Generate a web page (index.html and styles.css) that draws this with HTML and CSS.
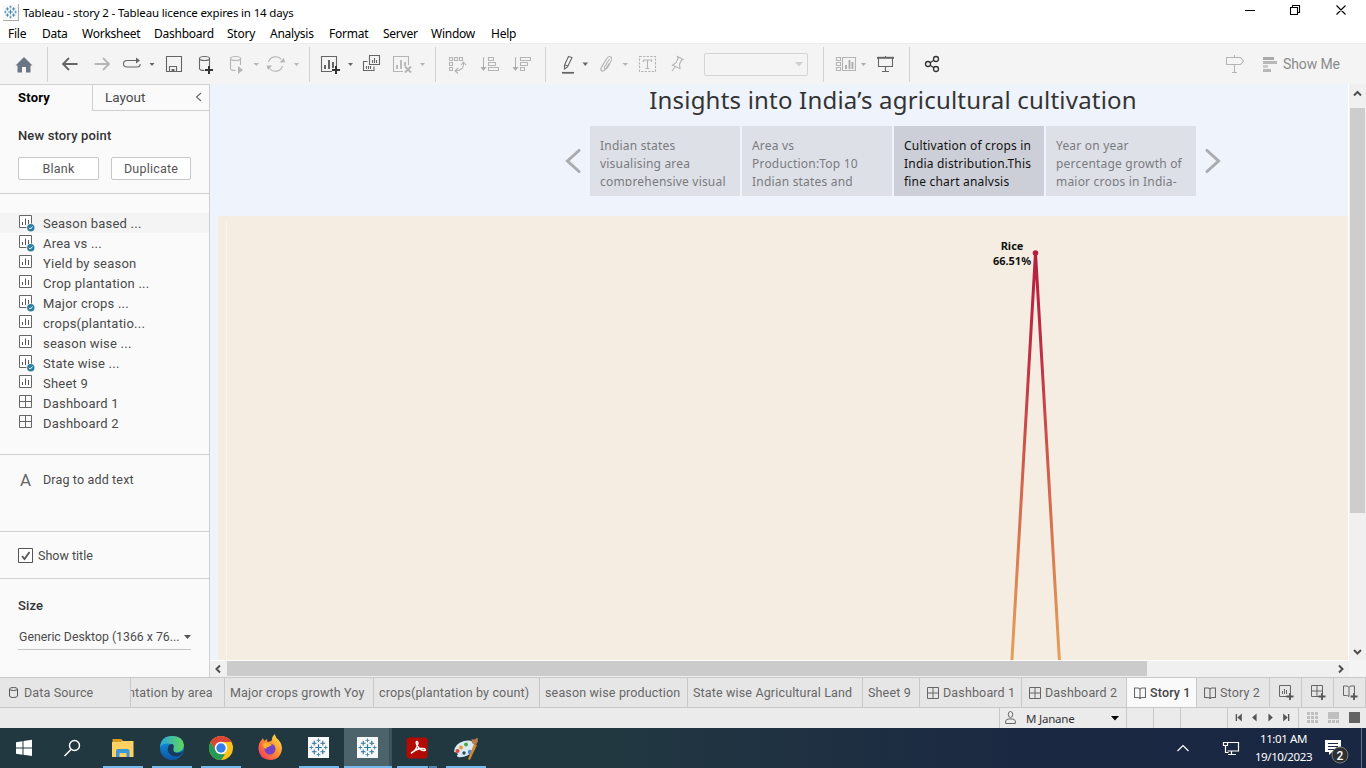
FILE: index.html
```html
<!DOCTYPE html>
<html lang="en">
<head>
<meta charset="utf-8">
<title>Tableau - story 2</title>
<link rel="stylesheet" href="styles.css">
</head>
<body>
<svg class="defs" width="0" height="0">
  <symbol id="sheet" viewBox="0 0 18 18"><path d="M1.5 1.5h12v12h-12z" fill="#fff" stroke="#666"/><path d="M4.5 8v3M7.5 4.500v6.500M10.500 6v5" stroke="#555" fill="none"/></symbol>
  <symbol id="sheet-used" viewBox="0 0 18 18"><path d="M1.500 1.500h12v12h-12z" fill="#fff" stroke="#666"/><path d="M4.500 8v3M7.500 4.500v6.500M10.500 6v5" stroke="#555" fill="none"/><circle cx="12.800" cy="13.800" r="4.400" fill="#fafafa"/><circle cx="12.800" cy="13.800" r="3.700" fill="#2e7d9f"/><path d="M11 13.800l1.300 1.300 2.300-2.600" stroke="#fff" fill="none"/></symbol>
  <symbol id="dash" viewBox="0 0 18 18"><path d="M1.500 1.500h12v12h-12zM7.500 1.500v12M1.500 7.500h12" fill="none" stroke="#666"/></symbol>
  <symbol id="dash-s" viewBox="0 0 12 12"><path d="M.5.5h11v11H.5zM6 .5v11M.5 6h11" fill="none" stroke="#666"/></symbol>
  <symbol id="book" viewBox="0 0 12 12"><path d="M.5 1l3.500 0q1.500.2 2 1.500 .5-1.300 2-1.500l3.500 0v9.500H8.500q-2 0-2.500 1.200-.5-1.200-2.500-1.200H.5zM6 2.500v9" fill="none" stroke="#666" stroke-width="1.100"/></symbol>
  <symbol id="tab" viewBox="0 0 22 22"><path fill="#f7f8f8" d="M0 0h22v22H0z"/><g fill="none"><path d="M11 7.500v7M7.500 11h7" stroke="#2b7cae" stroke-width="1.300"/><path d="M11 1.500v4M9 3.500h4M11 16.500v4M9 18.500h4M1.500 11h4M3.500 9v4M16.500 11h4M18.500 9v4" stroke="#4b86a8"/><path d="M6.500 4v5M4 6.500h5M15.500 4v5M13 6.500h5M6.500 13v5M4 15.500h5M15.500 13v5M13 15.500h5" stroke="#2f6f97" stroke-width="1.100"/></g></symbol>
</svg>

<header class="titlebar">
  <svg class="app-icon" width="16" height="17" viewBox="0 0 22 22"><use href="#tab"/></svg>
  <span class="app-title">Tableau - story 2 - Tableau licence expires in 14 days</span>
  <svg class="win-buttons" width="138" height="24" viewBox="1228 0 138 24"><path d="M1245 10.500h10M1290.500 7.500h7v7h-7zM1292.500 7.500v-2h7v7h-2M1336.500 5.500l9 9M1345.500 5.500l-9 9" fill="none" stroke="#000" stroke-width="1.100"/></svg>
</header>

<nav class="menubar">
  <span class="m1">File</span><span class="m2">Data</span><span class="m3">Worksheet</span><span class="m4">Dashboard</span><span class="m5">Story</span><span class="m6">Analysis</span><span class="m7">Format</span><span class="m8">Server</span><span class="m9">Window</span><span>Help</span>
</nav>

<div class="toolbar">
  <svg width="47" height="41" viewBox="0 43 47 41"><path d="M15.500 65.500L24 57l8.500 8.500h-2V72.500H26V67h-4v5.500h-4.500v-7z" fill="#6b7684"/></svg>
  <i class="sep"></i>
  <svg width="36" height="41" viewBox="48 43 36 41"><path d="M77.500 64H63M69 58l-6 6 6 6" class="k2"/></svg>
  <svg width="33" height="41" viewBox="84 43 33 41"><path d="M94.500 64H109M103 58l6 6-6 6" class="l2"/></svg>
  <svg width="43" height="41" viewBox="117 43 43 41"><path d="M133 60.500h-6q-3.500 0-3.500 3.200t3.500 3.300h10q3.200 0 3.200-3M133 60.500h5" class="k"/><path d="M136 57.500v6l4-3z" fill="#666"/><path d="M149.500 63h5l-2.500 3z" fill="#666"/></svg>
  <svg width="30" height="41" viewBox="160 43 30 41"><path d="M166.500 56.500h15v15h-15zM169.500 71v-4.500h7v5M173.500 71v-2" class="k"/><path d="M171.500 69h3v2.500h-3z" fill="#666"/></svg>
  <svg width="30" height="41" viewBox="190 43 30 41"><path d="M199.500 58.500v10q0 2 5 2M209.500 58.500V66" class="k"/><ellipse cx="204.500" cy="58.500" rx="5" ry="2" class="k"/><path d="M205 70h8M209 66v8" stroke="#333" stroke-width="2"/></svg>
  <svg width="42" height="41" viewBox="220 43 42 41"><path d="M230.500 58.500v10q0 2 5 2M240.500 58.500V65" class="l"/><ellipse cx="235.500" cy="58.500" rx="5" ry="2" class="l"/><path d="M238 66v8l5-4zM253.500 63h5.500l-2.700 3z" fill="#b5b5b5"/></svg>
  <svg width="47" height="41" viewBox="262 43 47 41"><path d="M268.500 62a7.500 7.500 0 0 1 13-2.500M282.500 66a7.500 7.500 0 0 1-13 2.500" class="l"/><path d="M279.500 62.500h5.500l-1-4.500zM266.500 65.500h5.500l-4 4.500zM294 63h5l-2.500 3z" fill="#b5b5b5"/></svg>
  <i class="sep"></i>
  <svg width="48" height="41" viewBox="310 43 48 41"><path d="M332 71.500h-10.500v-15h15V66" class="k"/><path d="M325 65v4M329 60v9M333 62v6" stroke="#555" stroke-width="1.800"/><path d="M332 70h8M336 66v8" stroke="#333" stroke-width="2"/><path d="M348 63h5l-2.500 3z" fill="#666"/></svg>
  <svg width="28" height="41" viewBox="358 43 28 41"><path d="M369.500 55.500h10v9h-10zM367.500 61.500h-4v9h10.500v-4" class="k"/><path d="M372.500 60v3M374.500 58v5M376.500 60v3M366.500 66v3M368.500 66v3M370.500 66v3" class="k"/></svg>
  <svg width="49" height="41" viewBox="386 43 49 41"><path d="M403 71.500h-9.500v-15h15V65" class="l"/><path d="M397 65v4M401 60v9M405 62v4M405 66.500l6 6M411 66.500l-6 6" stroke="#b5b5b5" stroke-width="1.800"/><path d="M420 63h5l-2.500 3z" fill="#b5b5b5"/></svg>
  <i class="sep"></i>
  <svg width="36" height="41" viewBox="436 43 36 41"><path d="M449.500 57.500h3v3h-3zM454.500 57.500h3v3h-3zM459.500 57.500h3v3h-3zM449.500 62.500h3v3h-3zM449.500 67.500h3v3h-3zM463.500 63q1 7-8 8M461 65l2.500-3 2.500 3M458 68l-3 3 3 2.500" class="l"/></svg>
  <svg width="32" height="41" viewBox="472 43 32 41"><path d="M483.500 57v12M488.500 57.500h5v3h-5zM488.500 62.500h7v3h-7zM488.500 67.500h10v3h-10z" class="l"/><path d="M480.500 67h6l-3 4z" fill="#aaa"/></svg>
  <svg width="41" height="41" viewBox="504 43 41 41"><path d="M515.500 57v12M520.500 57.500h10v3h-10zM520.500 62.500h7v3h-7zM520.500 67.500h4v3h-4z" class="l"/><path d="M512.500 67h6l-3 4z" fill="#aaa"/></svg>
  <i class="sep"></i>
  <svg width="46" height="41" viewBox="546 43 46 41"><path d="M568.500 56.500l3.500 1-4.500 9.500-3 2v-4zM565 65l3 1" class="k"/><path d="M562 72.800h12" stroke="#666" stroke-width="1.800"/><path d="M582.500 62.500h5.500l-2.700 3.500z" fill="#666"/></svg>
  <svg width="40" height="41" viewBox="592 43 40 41"><path d="M609.500 59l-5 8q-.5 2 1 2.300 1 0 2-1.500l3.500-6.500q1.500-4-1-4.700-2-.3-3.500 2.500l-5 8q-1.500 3 .5 4 2 .5 4-2.500l3-5" class="l"/><path d="M622.500 63h5.500l-2.700 3z" fill="#b5b5b5"/></svg>
  <svg width="30" height="41" viewBox="632 43 30 41"><path d="M639.500 56.500h16v15h-16z" class="l" stroke-dasharray="2.300 1.300"/><path d="M643.500 62v-2h8v2M647.500 60v8.500M645.500 68.500h4" class="l"/></svg>
  <svg width="42" height="41" viewBox="662 43 42 41"><path d="M677.500 56.500l5.500 3-1.500.7-2 4 .5 4.500-7.500-3.500 3.500-2.500 2-4zM675 67l-3 4" class="l"/></svg>
  <span class="combo"><svg width="8" height="5"><path d="M0 0h8L4 4.500z" fill="#d0d0d0"/></svg></span>
  <i class="sep"></i>
  <svg width="46" height="41" viewBox="824 43 46 41"><path d="M836.500 57.500h4v3h-4zM836.500 62.500h4v3h-4zM836.500 67.500h4v3h-4zM842.500 57.500h13v13h-13z" class="l"/><path d="M846 65v4M849.500 60v9M852.500 62v7" stroke="#aaa" stroke-width="1.800"/><path d="M861 63h5l-2.500 3z" fill="#aaa"/></svg>
  <svg width="39" height="41" viewBox="870 43 39 41"><path d="M878.500 58v8.500h14V58M885.500 56v2M885.500 66.500v5M882 71.500h7" class="k"/><path d="M877 57.800h17" stroke="#666" stroke-width="2"/></svg>
  <i class="sep"></i>
  <svg width="40" height="41" viewBox="910 43 40 41"><g fill="none" stroke="#333" stroke-width="1.300"><circle cx="928" cy="64" r="2.500"/><circle cx="936" cy="59" r="2.500"/><circle cx="936" cy="69" r="2.500"/><path d="M930 62.700l4-2.500M930 65.300l4 2.500"/></g></svg>
  <svg class="sign" width="34" height="41" viewBox="1222 43 34 41"><path d="M1226.500 57.500h14l3 3.500-3 3.500h-14zM1234.500 55v2M1234.500 65v7M1232 72.500h5" class="l"/></svg>
  <svg class="bars" width="14" height="15"><path d="M0 0h11v3H0z" fill="#aaa"/><path d="M0 4h14v3H0zM0 12h8v3H0z" fill="#b8b8b8"/><path d="M0 8h5v3H0z" fill="#ccc"/></svg>
  <span class="showme">Show Me</span>
</div>

<main class="main">
  <aside class="panel">
    <div class="ptabs"><b>Story</b><span class="lay"><span class="lay-t">Layout</span><svg width="7" height="10"><path d="M6 1L1.500 5 6 9" class="k"/></svg></span></div>
    <section class="newpoint">
      <h3>New story point</h3>
      <div class="btns"><button>Blank</button><button class="dup">Duplicate</button></div>
    </section>
    <ul class="sheets">
      <li class="hov"><svg><use href="#sheet-used"/></svg>Season based ...</li>
      <li><svg><use href="#sheet-used"/></svg>Area vs ...</li>
      <li><svg><use href="#sheet"/></svg>Yield by season</li>
      <li><svg><use href="#sheet"/></svg>Crop plantation ...</li>
      <li><svg><use href="#sheet-used"/></svg>Major crops ...</li>
      <li><svg><use href="#sheet"/></svg>crops(plantatio...</li>
      <li><svg><use href="#sheet"/></svg>season wise ...</li>
      <li><svg><use href="#sheet-used"/></svg>State wise ...</li>
      <li><svg><use href="#sheet"/></svg>Sheet 9</li>
      <li><svg><use href="#dash"/></svg>Dashboard 1</li>
      <li><svg><use href="#dash"/></svg>Dashboard 2</li>
    </ul>
    <section class="drag"><span class="a">A</span><span class="dragt">Drag to add text</span></section>
    <section class="showtitle"><svg width="15" height="15"><path d="M.5.5h14v14H.5z" fill="#fff" stroke="#555"/><path d="M4 8l2.500 3 5-7" fill="none" stroke="#555" stroke-width="1.800"/></svg><span>Show title</span></section>
    <section class="size">
      <h3>Size</h3>
      <div class="sel"><span>Generic Desktop (1366 x 76...</span><svg width="7" height="4"><path d="M0 0h7L3.500 4z" fill="#555"/></svg></div>
    </section>
  </aside>

  <div class="work">
    <div class="story">
      <h1>Insights into India’s agricultural cultivation</h1>
      <div class="nav">
        <svg width="16" height="24"><path d="M14 1.500L2.500 12 14 22.500" fill="none" stroke="#a9abae" stroke-width="3" stroke-linecap="round"/></svg>
        <div class="cards">
          <div class="card"><p>Indian states<br>visualising area<br>comprehensive visual</p></div>
          <div class="card"><p>Area vs<br>Production:Top 10<br>Indian states and</p></div>
          <div class="card on"><p>Cultivation of crops in<br>India distribution.This<br>fine chart analysis</p></div>
          <div class="card"><p>Year on year<br>percentage growth of<br>major crops in India-</p></div>
        </div>
        <svg width="16" height="24"><path d="M2 1.500L13.500 12 2 22.500" fill="none" stroke="#a9abae" stroke-width="3" stroke-linecap="round"/></svg>
      </div>
      <div class="viz">
        <svg class="chart" width="1130" height="444" viewBox="218 216 1130 444">
          <defs><linearGradient id="g" gradientUnits="userSpaceOnUse" x1="0" y1="253" x2="0" y2="660"><stop offset="0" stop-color="#b71d3e"/><stop offset=".25" stop-color="#c02f43"/><stop offset=".6" stop-color="#d36a4d"/><stop offset="1" stop-color="#e5a059"/></linearGradient></defs>
          <path d="M226.500 222v438" stroke="#faf5ee"/>
          <path d="M1011.800 662L1035.500 253 1059.500 662" fill="none" stroke="url(#g)" stroke-width="3" stroke-linejoin="round"/>
          <circle cx="1035.500" cy="253" r="2.800" fill="#b71d3e"/>
          <text x="1012" y="250" class="lab">Rice</text>
          <text x="1012" y="265" class="lab">66.51%</text>
        </svg>
      </div>
    </div>
    <div class="vscroll"><svg width="17" height="24"><path d="M5 11.500L8.500 8l3.500 3.500" class="arr"/></svg><i></i><svg class="end" width="17" height="17"><path d="M5 7l3.500 3.500L12 7" class="arr"/></svg></div>
    <div class="hscroll"><svg width="17" height="16"><path d="M10 4.500L6.500 8l3.500 3.500" class="arr"/></svg><i></i><svg class="end" width="17" height="16"><path d="M7 4.500l3.500 3.500L7 11.500" class="arr"/></svg></div>
    <div class="corner"></div>
  </div>
</main>

<div class="tabs">
  <div class="t t-ds"><svg width="9" height="11"><path d="M.5 2v7q0 1.500 4 1.500t4-1.500V2" fill="none" stroke="#555"/><ellipse cx="4.500" cy="2" rx="4" ry="1.500" fill="none" stroke="#555"/></svg><span>Data Source</span></div>
  <div class="t t-area"><span>ntation by area</span></div>
  <div class="t t-maj"><span>Major crops growth Yoy</span></div>
  <div class="t t-cr"><span>crops(plantation by count)</span></div>
  <div class="t t-se"><span>season wise production</span></div>
  <div class="t t-st"><span>State wise Agricultural Land</span></div>
  <div class="t t-s9"><span>Sheet 9</span></div>
  <div class="t t-d1"><svg class="ti"><use href="#dash-s"/></svg><span>Dashboard 1</span></div>
  <div class="t t-d2"><svg class="ti"><use href="#dash-s"/></svg><span>Dashboard 2</span></div>
  <div class="t t-y1 act"><svg class="ti"><use href="#book"/></svg><span>Story 1</span></div>
  <div class="t t-y2"><svg class="ti"><use href="#book"/></svg><span>Story 2</span></div>
  <div class="t t-n"><svg width="16" height="16"><path d="M9 11.500H.5V.5h11V8M3.500 6v3M5.500 4v5M7.500 5v4" fill="none" stroke="#666"/><path d="M7.500 11.500h7M11 8v7" stroke="#555" stroke-width="1.800"/></svg></div>
  <div class="t t-n"><svg width="16" height="16"><path d="M8 11.500H.5V.5h11V8M6 .5v11M.5 6h11" fill="none" stroke="#666"/><path d="M7.500 11.500h7M11 8v7" stroke="#555" stroke-width="1.800"/></svg></div>
  <div class="t t-n"><svg width="16" height="16"><path d="M6 11.500q-1-1-2.500-1H.5V1H4q1.500.2 2 1.500Q6.500 1.200 8 1h3.500v7M6 2.500v9" fill="none" stroke="#666"/><path d="M7.500 11.500h7M11 8v7" stroke="#555" stroke-width="1.800"/></svg></div>
</div>

<div class="status">
  <div class="user"><svg width="11" height="14"><ellipse cx="5.500" cy="3.500" rx="2.200" ry="3" fill="none" stroke="#666"/><path d="M.7 12.500V10q.5-2 3-2h3.600q2.500 0 3 2v2.500z" fill="none" stroke="#666"/></svg><span>M Janane</span><svg width="8" height="5"><path d="M0 0h8L4 4.500z"/></svg></div>
  <i class="c27"></i><i class="c27"></i><i class="c47"></i>
  <svg class="pager" width="71" height="20" viewBox="1228 708 71 20"><path d="M1236.500 714v7M1289.500 714v7" stroke="#555" stroke-width="1.400"/><path d="M1242 713.500v8l-4.500-4zM1257 713.500v8l-4.500-4zM1269 713.500v8l4.500-4zM1284 713.500v8l4.500-4z" fill="#555"/></svg>
  <svg class="views" width="66" height="20" viewBox="1299 708 66 20"><g fill="#bfbfbf"><path d="M1307 712h3v3h-3zM1311 712h3v3h-3zM1315 712h3v3h-3zM1307 716h3v3h-3zM1311 716h3v3h-3zM1315 716h3v3h-3zM1307 720h3v3h-3zM1311 720h3v3h-3zM1315 720h3v3h-3zM1328 712h11v7h-11zM1328 720h3v3h-3zM1332 720h3v3h-3zM1336 720h3v3h-3z"/></g><path d="M1349 712h11v11h-11z" fill="#636363"/></svg>
</div>

<footer class="taskbar">
  <svg width="48" height="40" viewBox="0 728 48 40"><path d="M16 742.300l6.500-1v6.200H16zM23.500 741l8.500-1.200v7.700h-8.500zM16 748.500h6.500v6.300l-6.500-1zM23.500 748.500H32v7.500l-8.500-1.200z" fill="#fff"/></svg>
  <svg width="49" height="40" viewBox="48 728 49 40"><circle cx="74.500" cy="745.500" r="5" fill="none" stroke="#fff" stroke-width="1.400"/><path d="M71 749.500l-6.500 6.500" stroke="#fff" stroke-width="1.500"/></svg>
  <svg width="49" height="40" viewBox="97 728 49 40"><path d="M112.500 739h9l1.500 2v4h-10.500z" fill="#d99b1c"/><path d="M112 742h9l1-1h11.500v16H112z" fill="#fdd262"/><path d="M116 757v-6q0-2 2-2h9.500q2 0 2 2v6h-3v-4h-7v4z" fill="#3c96d8"/><path d="M103 766h40v2h-40z" class="ul"/></svg>
  <svg width="49" height="40" viewBox="146 728 49 40"><defs><linearGradient id="e1"><stop offset="0" stop-color="#2aa6dc"/><stop offset="1" stop-color="#61d65b"/></linearGradient><linearGradient id="e2" x2="0" y2="1"><stop offset="0" stop-color="#1599df"/><stop offset="1" stop-color="#0a57aa"/></linearGradient></defs><circle cx="172" cy="748" r="12" fill="url(#e2)"/><path d="M160 747q1-11 12-11 11 0 12 9-.5 7-7.500 7.500-4-.5-3-3 .5-5-5-6-6-.5-8.500 3.500z" fill="url(#e1)"/><path d="M169 745q5-3 4.700 2-2 5 3 6 4 .5 6.500-2-2 5-6 5.500-8 0-9.500-6-.2-3 1.300-5.500z" fill="#173c5b"/><path d="M152 766h40v2h-40z" class="ul"/></svg>
  <svg width="49" height="40" viewBox="195 728 49 40"><circle cx="221" cy="748" r="12" fill="#fbc116"/><path d="M210.600 742a12 12 0 0 1 20.800 0H221l-5.200 9z" fill="#dd4334"/><path d="M210.600 742L216 751l5 3 4 .5-4 5.500a12 12 0 0 1-10.400-18z" fill="#239a55"/><circle cx="221" cy="748" r="6.200" fill="#fff"/><circle cx="221" cy="748" r="4.700" fill="#367ee9"/><path d="M201 766h40v2h-40z" class="ul"/></svg>
  <svg width="49" height="40" viewBox="244 728 49 40"><defs><linearGradient id="ff" x1="1" x2="0" y2="1"><stop offset="0" stop-color="#fff44a"/><stop offset=".45" stop-color="#ff9230"/><stop offset="1" stop-color="#f32b65"/></linearGradient></defs><path d="M260 742l3-4 1 3 3-2 .5 3 4-1q0-4 3-7l2 4q5 4 5.500 10-1 12-12 12-11-1-11.500-11 0-5 1.500-7z" fill="url(#ff)"/><circle cx="270" cy="749" r="5.500" fill="#7444c8"/><path d="M263 744q5-3 9 1l-4 2q-2 0-2 2-3-1-3-5z" fill="#ffb22b"/></svg>
  <svg width="51" height="40" viewBox="293 728 51 40"><use href="#tab" x="308" y="737" width="21" height="21"/><path d="M299 766h40v2h-40z" class="ul"/></svg>
  <svg width="49" height="40" viewBox="344 728 49 40"><path d="M344 728h45v40h-45z" fill="#4d636b"/><path d="M389 728h3v40h-3z" fill="#3c515a"/><use href="#tab" x="357" y="737" width="21" height="21"/><path d="M344 766h48v2h-48z" class="ul"/></svg>
  <svg width="49" height="40" viewBox="393 728 49 40"><rect x="406.500" y="737.500" width="21" height="21" rx="3" fill="#b30b00"/><path d="M411 753q6-3 7-10-.3-2-1.500-1.500-1.500 2 3 7 3 3 6 1.500 0-2-5-1.500-5 .7-9 4.500z" fill="none" stroke="#fff" stroke-width="1.400"/><path d="M397 766h31v2h-31z" class="ul"/><path d="M429 766h8v2h-8z" fill="#5487b4"/></svg>
  <svg width="49" height="40" viewBox="442 728 49 40"><path d="M454 752q0-8 10-11 9-2 11 4 1 6-5 9-7 4-12 3-2-1 0-3-1-2-4-2z" fill="#d9e9f2"/><circle cx="457.500" cy="751" r="2" fill="#df453c"/><circle cx="461" cy="747.500" r="1.900" fill="#e99a28"/><circle cx="466" cy="744.500" r="1.900" fill="#4aa646"/><circle cx="464" cy="753" r="1.700" fill="#2f4853"/><circle cx="470" cy="752" r="2.200" fill="#3f8cd1"/><path d="M474 744l3 1-7 15-2-1z" fill="#d58531"/><path d="M472 743l-.5-4 3 .5 3-2 .5 4-2.500 4z" fill="#b77a4a"/><path d="M446 766h40v2h-40z" class="ul"/></svg>
  <svg class="tray" width="80" height="40" viewBox="1170 728 80 40"><path d="M1177.500 751l5.500-5.500 5.500 5.500M1226 742.500h12.500v8.500h-11M1231.500 751v3M1228 754.500h8M1225.500 746v6.500h3M1223.500 742.500h4v3h-4z" fill="none" stroke="#fff" stroke-width="1.200"/></svg>
  <div class="clock"><span>11:01 AM</span><span class="date">19/10/2023</span></div>
  <svg class="note" width="49" height="40" viewBox="1317 728 49 40"><path d="M1325 740h16v12h-9l-3 3v-3h-4z" fill="#fff"/><path d="M1328 743.500h10M1328 746.500h10M1328 749.500h6" stroke="#1b2842"/><circle cx="1340" cy="755" r="8" fill="#2d2f33" stroke="#777" stroke-width="1"/><text x="1340" y="759.500" class="badge">2</text><path d="M1361.500 728v40" stroke="#687287"/></svg>
</footer>
</body>
</html>
```

FILE: styles.css
```css
* { box-sizing: border-box; }
body { margin: 0; width: 1366px; height: 768px; overflow: hidden; display: flex; flex-direction: column; font-family: Roboto, "Liberation Sans", sans-serif; font-size: 13px; color: #4a4a4a; background: #fff; }
svg { display: block; flex: none; }
.defs { position: absolute; }
h1, h3, p, ul { margin: 0; padding: 0; }
.k { fill: none; stroke: #666; stroke-width: 1.1; }
.k2 { fill: none; stroke: #666; stroke-width: 1.8; }
.l { fill: none; stroke: #b5b5b5; stroke-width: 1.1; }
.l2 { fill: none; stroke: #b5b5b5; stroke-width: 1.8; }
.arr { fill: none; stroke: #505050; stroke-width: 2; }

.titlebar { height: 24px; display: flex; align-items: center; padding-left: 3px; flex: none; }
.app-icon { border-right: 1px solid #aaa; border-bottom: 1px solid #aaa; }
.app-title { margin-left: 4px; font: 11.5px "Noto Sans", sans-serif; color: #000; letter-spacing: -.16px; white-space: nowrap; }
.win-buttons { margin-left: auto; }
.menubar { height: 19px; flex: none; display: flex; align-items: center; padding-left: 8px; font: 12px "Noto Sans", sans-serif; letter-spacing: -.25px; color: #000; }
.menubar span { flex: none; }
.m1 { width: 34px; } .m2 { width: 40px; } .m3 { width: 72px; } .m4 { width: 73px; } .m5 { width: 43px; } .m6 { width: 59px; } .m7 { width: 54px; } .m8 { width: 48px; } .m9 { width: 60px; }

.toolbar { height: 41px; flex: none; background: #f4f4f4; display: flex; align-items: center; border-top: 1px solid #ececec; }
.toolbar > svg { margin-top: -1px; }
.sep { width: 1px; height: 35px; background: #d2d2d2; flex: none; }
.combo { width: 104px; height: 23px; border: 1px solid #d4d4d4; border-radius: 2px; flex: none; margin-right: 15px; display: flex; align-items: center; justify-content: flex-end; padding-right: 4px; }
.sign { margin-left: 272px; }
.toolbar .bars { margin-left: 7px; margin-top: 0; }
.showme { margin-left: 6px; font-size: 14px; color: #8a8a8a; letter-spacing: -.1px; white-space: nowrap; }

.main { height: 593px; flex: none; display: flex; }
.panel { width: 210px; background: #fafafa; border-right: 1px solid #cfcfcf; border-top: 1px solid #d0d0d0; flex: none; }
.ptabs { height: 26px; display: flex; }
.ptabs b { width: 92px; padding-left: 18px; line-height: 25px; color: #000; font-size: 13px; letter-spacing: .2px; }
.lay { flex: 1; border-left: 1px solid #cfcfcf; border-bottom: 1px solid #cfcfcf; display: flex; align-items: center; padding: 0 7px 1px 12px; justify-content: space-between; font-size: 13.500px; }
.panel h3 { font-size: 13px; font-weight: 500; color: #333; line-height: 16px; letter-spacing: .15px; }
.newpoint { height: 83px; border-bottom: 1px solid #cfcfcf; padding: 17px 18px 0; }
.btns { display: flex; gap: 12px; margin-top: 13px; }
.btns button { width: 81px; height: 23px; padding: 0; background: #fff; border: 1px solid #c8c8c8; border-radius: 2px; font: 12.500px Roboto, sans-serif; color: #555; letter-spacing: .2px; }
.btns .dup { width: 80px; }
.sheets { list-style: none; height: 261px; padding-top: 19px; border-bottom: 1px solid #cfcfcf; }
.sheets li { height: 20px; display: flex; align-items: center; padding-left: 18px; letter-spacing: .22px; white-space: nowrap; }
.sheets svg { width: 18px; height: 18px; margin-right: 7px; }
.hov { background: #f4f4f4; }
.drag { height: 77px; border-bottom: 1px solid #cfcfcf; display: flex; padding: 15px 0 0 20px; line-height: 20px; }
.a { width: 23px; font-size: 17px; color: #666; }
.dragt { font-size: 12.500px; letter-spacing: .15px; }
.showtitle { height: 47px; border-bottom: 1px solid #cfcfcf; display: flex; align-items: center; padding: 0 0 0 18px; gap: 5px; font-size: 12.500px; }
.size { padding: 19px 18px 0; }
.sel { margin-top: 11px; height: 25px; border-bottom: 1px solid #c4c4c4; display: flex; align-items: center; justify-content: space-between; padding-left: 1px; font-size: 12.300px; white-space: nowrap; }

.work { flex: 1; display: grid; grid-template-columns: 1139px 17px; grid-template-rows: 576px 17px; }
.story { background: #eff3fc; border-right: 1px solid #fff; overflow: hidden; }
.story h1 { width: 606px; margin-left: 380px; height: 42px; line-height: 32px; text-align: center; font: 400 24px/32px "Noto Sans", sans-serif; color: #333; letter-spacing: .2px; white-space: nowrap; }
.nav { display: flex; align-items: center; gap: 9px; height: 70px; padding-left: 355px; }
.cards { display: flex; gap: 2px; }
.card { width: 150px; height: 70px; padding: 11px 0 9px 10px; background: #dde0e7; color: #7a7b7e; }
.card p { height: 49px; overflow: hidden; font: 12px/18px "Noto Sans", sans-serif; letter-spacing: .2px; white-space: nowrap; }
.card.on { background: #cccfd7; color: #111; }
.viz { margin: 20px 0 0 8px; height: 444px; background: #f5ede2; }
.lab { font: bold 11px "Noto Sans", sans-serif; text-anchor: middle; fill: #111; }
.vscroll { background: #f0f0f0; display: flex; flex-direction: column; padding-left: 0; }
.vscroll i { width: 15px; height: 405px; background: #cdcdcd; margin-left: 1px; }
.end { margin-top: auto; }
.hscroll { background: #f0f0f0; border-top: 1px solid #fff; display: flex; }
.hscroll i { width: 920px; height: 15px; background: #cbcbcb; }
.hscroll .end { margin: 0 0 0 auto; }
.corner { background: #f4f4f4; }

.tabs { height: 31px; flex: none; background: #e6e6e6; border-top: 1px solid #c8c8c8; border-bottom: 1px solid #c8c8c8; display: flex; }
.t { border-right: 1px solid #c8c8c8; display: flex; align-items: center; padding-left: 5px; font-size: 12.500px; color: #666; white-space: nowrap; overflow: hidden; flex: none; letter-spacing: .15px; }
.ti { width: 12px; height: 12px; margin-right: 4px; }
.t-ds { width: 131px; padding-left: 9px; } .t-ds svg { margin-right: 6px; }
.t-area { width: 94px; padding-left: 0; } .t-area span { margin-left: -3px; }
.t-maj { width: 149px; } .t-cr { width: 166px; } .t-se { width: 148px; } .t-st { width: 175px; } .t-s9 { width: 57px; }
.t-d1 { width: 102px; padding-left: 7px; } .t-d2 { width: 105px; padding-left: 7px; }
.t-y1 { width: 70px; padding-left: 7px; } .t-y2 { width: 73px; padding-left: 7px; }
.t-n { width: 32px; padding-left: 9px; }
.act { background: #fafafa; font-weight: 500; color: #444; }

.status { height: 20px; flex: none; background: #ebebeb; display: flex; padding-left: 999px; }
.user { width: 128px; border-left: 1px solid #c8c8c8; border-right: 1px solid #c8c8c8; display: flex; align-items: center; padding: 0 7px 0 5px; font-size: 12px; color: #333; }
.user span { margin: 0 auto 0 10px; font: 11.500px "Noto Sans", sans-serif; letter-spacing: -.2px; }
.status i { border-right: 1px solid #c8c8c8; }
.c27 { width: 27px; } .c47 { width: 47px; }
.pager { border-right: 1px solid #c8c8c8; }

.taskbar { height: 40px; flex: none; background: linear-gradient(90deg, #213841 0, #213841 45%, #1b2842 75%, #1a2742 100%); display: flex; }
.ul { fill: #76b9ed; }
.tray { margin-left: auto; }
.clock { width: 67px; display: flex; flex-direction: column; align-items: center; padding-top: 2px; font: 11.500px/18px "Noto Sans", sans-serif; color: #fff; letter-spacing: -.4px; }
.badge { font: 500 12px Roboto, sans-serif; text-anchor: middle; fill: #fff; }
```
